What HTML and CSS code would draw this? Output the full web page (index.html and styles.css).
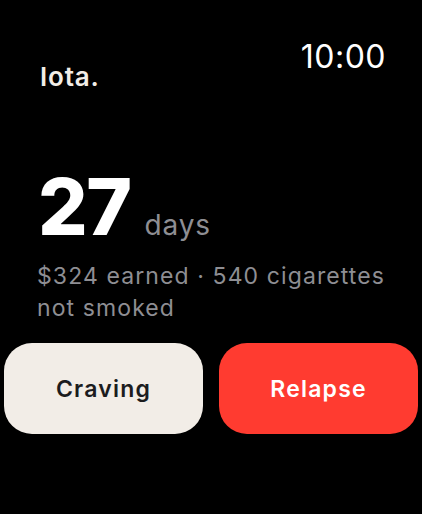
FILE: index.html
```html
<!DOCTYPE html>
<html>
<head>
<meta charset="utf-8">
<link rel="stylesheet" href="styles.css">
</head>
<body>
<div class="screen">
  <div class="status"><span class="time">10:00</span></div>
  <div class="brand">Iota.</div>
  <div class="streak">
    <span class="count">27</span><span class="unit">days</span>
  </div>
  <div class="stats">$324 earned · 540 cigarettes not smoked</div>
  <div class="actions">
    <button class="btn btn-craving">Craving</button>
    <button class="btn btn-relapse">Relapse</button>
  </div>
</div>
</body>
</html>
```
FILE: styles.css
```css
html, body {
  margin: 0;
  padding: 0;
  background: #000;
}
body {
  font-family: Inter, "Noto Sans", sans-serif;
  width: 422px;
  height: 514px;
  overflow: hidden;
}
.screen {
  display: flex;
  flex-direction: column;
}
.status {
  display: flex;
  justify-content: flex-end;
  padding: 38px 36px 0 0;
  height: 38px;
}
.time {
  color: #fff;
  font-size: 32px;
  font-weight: 400;
  line-height: 38px;
  letter-spacing: 0.5px;
}
.brand {
  color: #f2ede7;
  font-size: 26px;
  font-weight: 600;
  line-height: 30px;
  margin: -14px 0 0 40px;
  letter-spacing: 0.8px;
}
.streak {
  display: flex;
  align-items: baseline;
  margin: 77px 0 0 38px;
  height: 76px;
}
.count {
  color: #fff;
  font-size: 78px;
  font-weight: 800;
  line-height: 76px;
  letter-spacing: -1.5px;
}
.unit {
  color: #8e8e93;
  font-size: 28px;
  font-weight: 400;
  margin-left: 14px;
  letter-spacing: 0.8px;
}
.stats {
  color: #8e8e93;
  font-size: 23px;
  line-height: 32px;
  margin: 15px 0 0 37px;
  max-width: 370px;
  letter-spacing: 1.1px;
}
.actions {
  display: flex;
  gap: 16px;
  padding: 0 4px;
  margin-top: 19px;
}
.btn {
  flex: 1;
  height: 91px;
  border: none;
  border-radius: 28px;
  font-family: Inter, "Noto Sans", sans-serif;
  font-size: 23px;
  font-weight: 600;
  letter-spacing: 1.2px;
}
.btn-craving {
  background: #f2ede7;
  color: #1c1c1e;
}
.btn-relapse {
  background: #ff3b30;
  color: #fff;
}
```
